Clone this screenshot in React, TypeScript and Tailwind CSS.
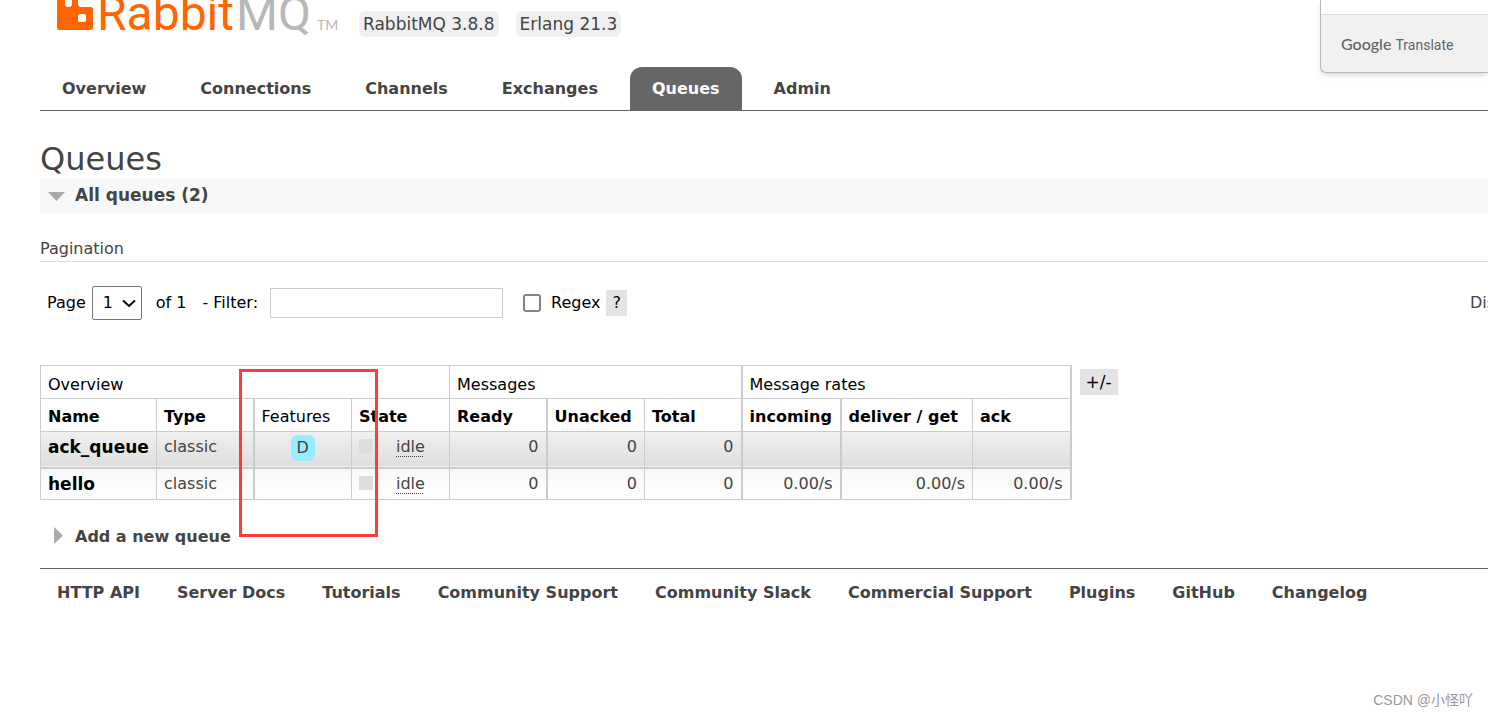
import type { ReactNode } from 'react'

const tabs = ['Overview', 'Connections', 'Channels', 'Exchanges', 'Queues', 'Admin']

const footerLinks = [
  'HTTP API',
  'Server Docs',
  'Tutorials',
  'Community Support',
  'Community Slack',
  'Commercial Support',
  'Plugins',
  'GitHub',
  'Changelog',
]

const queues = [
  { name: 'ack_queue', type: 'classic', durable: true, state: 'idle', ready: 0, unacked: 0, total: 0, rate: '' },
  { name: 'hello', type: 'classic', durable: false, state: 'idle', ready: 0, unacked: 0, total: 0, rate: '0.00/s' },
]

function Logo() {
  return (
    <svg width="284" height="36" viewBox="0 0 284 36" role="img" aria-label="RabbitMQ">
      <path
        fill="#ff6600"
        fillRule="evenodd"
        d="M0 0H8V4Q8 7 11 7H12Q15 7 15 4V0H21V4Q21 7 24 7H34Q36 7 36 9V27Q36 30 33 30H2Q0 30 0 28ZM23 14Q21 14 21 16V20Q21 22 23 22H27Q29 22 29 20V16Q29 14 27 14Z"
      />
      <text x="40" y="30" fontSize="48" fill="#ff6600" fontFamily="Roboto, sans-serif">
        Rabbit
      </text>
      <text x="179" y="30" fontSize="48" fill="#b8b8b8" fontFamily="Roboto, sans-serif">
        MQ
      </text>
      <text x="260" y="30" fontSize="14" fill="#b8b8b8" fontFamily="Lato, sans-serif">
        TM
      </text>
    </svg>
  )
}

function Pill({ children }: { children: ReactNode }) {
  return <span className="rounded-md bg-[#f0f0f0] px-1 text-[17px] leading-[26px]">{children}</span>
}

function HeadCell({ children, bold = true }: { children: ReactNode; bold?: boolean }) {
  return (
    <th className={`border border-[#ccc] px-[7px] pt-1 text-left text-black ${bold ? 'font-bold' : 'font-normal'}`}>
      {children}
    </th>
  )
}

function NumberCell({ children }: { children: ReactNode }) {
  return <td className="border border-[#ccc] px-[7px] pt-[3px] text-right align-top">{children}</td>
}

function QueueTable() {
  return (
    <table className="w-[1030px] shrink-0 table-fixed border-collapse border-r-2 border-[#ccc] leading-6">
      <colgroup>
        <col className="w-[116px]" />
        <col className="w-[97px] border-r-2 border-[#ccc]" />
        <col className="w-[98px]" />
        <col className="w-[98px]" />
        <col className="w-[97px] border-r-2 border-[#ccc]" />
        <col className="w-[98px]" />
        <col className="w-[97px] border-r-2 border-[#ccc]" />
        <col className="w-[99px] border-r-2 border-[#ccc]" />
        <col className="w-[132px]" />
        <col className="w-[98px]" />
      </colgroup>
      <thead>
        <tr className="h-[33px] text-left text-black">
          <th colSpan={4} className="border border-[#ccc] px-[7px] pt-1.5 font-normal">Overview</th>
          <th colSpan={3} className="border border-[#ccc] px-[7px] pt-1.5 font-normal">Messages</th>
          <th colSpan={3} className="border border-[#ccc] px-[7px] pt-1.5 font-normal">Message rates</th>
        </tr>
        <tr className="h-[33px]">
          <HeadCell>Name</HeadCell>
          <HeadCell>Type</HeadCell>
          <HeadCell bold={false}>Features</HeadCell>
          <HeadCell>State</HeadCell>
          <HeadCell>Ready</HeadCell>
          <HeadCell>Unacked</HeadCell>
          <HeadCell>Total</HeadCell>
          <HeadCell>incoming</HeadCell>
          <HeadCell>deliver / get</HeadCell>
          <HeadCell>ack</HeadCell>
        </tr>
      </thead>
      <tbody>
        {queues.map((q) => (
          <tr
            key={q.name}
            className={
              q.durable
                ? 'h-9 border-b-2 border-[#ccc] bg-linear-to-b from-[#f0f0f0] to-[#dfdfdf]'
                : 'h-8 bg-linear-to-b from-[#f8f8f8] to-white'
            }
          >
            <td className="border border-[#ccc] px-[7px] pt-[3px] align-top text-[17px] font-bold text-black">
              <a href="#queue">{q.name}</a>
            </td>
            <td className="border border-[#ccc] px-[7px] pt-[3px] align-top">{q.type}</td>
            <td className="border border-[#ccc] pt-[3px] text-center align-top">
              {q.durable && (
                <span className="inline-block rounded-md bg-[#99ebff] px-1.5 leading-[26px]">D</span>
              )}
            </td>
            <td className="border border-[#ccc] px-[7px] pt-1 align-top">
              <div className="flex items-start">
                <span className="mt-[3px] mr-[23px] size-3.5 bg-[#ddd]" />
                <span className="leading-[22px] underline decoration-dotted decoration-1 underline-offset-4">
                  {q.state}
                </span>
              </div>
            </td>
            <NumberCell>{q.ready}</NumberCell>
            <NumberCell>{q.unacked}</NumberCell>
            <NumberCell>{q.total}</NumberCell>
            <NumberCell>{q.rate}</NumberCell>
            <NumberCell>{q.rate}</NumberCell>
            <NumberCell>{q.rate}</NumberCell>
          </tr>
        ))}
      </tbody>
    </table>
  )
}

function TranslatePanel() {
  return (
    <aside className="absolute top-0 right-0 w-[168px] rounded-bl-md border-b border-l border-[#b4b8b8] bg-[#f1f1f1] shadow-md">
      <div className="h-3.5 bg-white" />
      <div className="border-t border-[#ddd] pl-5 font-[Lato,sans-serif] text-base leading-[57px] text-[#636569]">
        <span className="font-medium">Google</span> <span className="font-[Roboto] text-sm leading-none">Translate</span>
      </div>
    </aside>
  )
}

export default function App() {
  return (
    <div className="relative min-h-screen overflow-hidden bg-white pl-10 font-['DejaVu_Sans',Verdana,sans-serif] text-base text-[#444]">
      <header>
        <div className="flex h-[67px] items-start pl-[17px]">
          <Logo />
          <div className="flex gap-[17px] pt-[11px] pl-[18px]">
            <Pill>RabbitMQ 3.8.8</Pill>
            <Pill>Erlang 21.3</Pill>
          </div>
        </div>
        <nav className="flex gap-2.5 border-b border-[#666] font-bold">
          {tabs.map((tab) => (
            <a
              key={tab}
              href="#tab"
              className={`px-[22px] leading-[43px] ${tab === 'Queues' ? 'rounded-t-xl bg-[#666] text-white' : ''}`}
            >
              {tab}
            </a>
          ))}
        </nav>
      </header>

      <main>
        <h1 className="pt-7 text-[32px] leading-10">Queues</h1>
        <h2 className="bg-[#f8f8f8] font-bold">
          <button type="button" className="flex h-[34px] items-center pl-2 text-[17px]">
            <svg width="17" height="10" viewBox="0 0 17 10" className="mr-2.5" aria-hidden="true">
              <path d="M0 1H17L8.500 10Z" fill="#aaa" />
            </svg>
            All queues (2)
          </button>
        </h2>

        <h3 className="mt-6 border-b border-[#ddd] leading-6">Pagination</h3>
        <div className="mt-6 flex items-center pl-[7px] whitespace-nowrap text-black">
          <label htmlFor="page" className="mr-1.5">Page</label>
          <div className="relative">
            <select id="page" className="h-[34px] w-[50px] appearance-none rounded-xs border border-[#767676] bg-white pl-2.5">
              <option>1</option>
            </select>
            <svg
              width="14"
              height="9"
              viewBox="0 0 14 9"
              className="pointer-events-none absolute top-[13px] right-1.5"
              aria-hidden="true"
            >
              <path d="M1 1.500L7 7L13 1.500" fill="none" stroke="#000" strokeWidth="2" />
            </svg>
          </div>
          <span className="ml-3.5">of 1</span>
          <label htmlFor="filter" className="ml-4">- Filter:</label>
          <input id="filter" type="text" className="ml-3 h-[30px] w-[233px] border border-[#ccc] px-1" />
          <input
            id="regex"
            type="checkbox"
            className="ml-5 size-[18px] appearance-none rounded-[3px] border-2 border-[#858585]"
          />
          <label htmlFor="regex" className="ml-2.5">Regex</label>
          <button type="button" className="ml-1.5 bg-[#e4e4e4] px-1.5 leading-[26px]">?</button>
          <span className="ml-auto w-[18px] text-[#444]">Displaying</span>
        </div>

        <div className="relative mt-[45px] flex items-start">
          <QueueTable />
          <button type="button" className="mt-1 ml-2 bg-[#e4e4e4] px-1.5 text-[17px] leading-[26px] text-black">+/-</button>
          <div className="pointer-events-none absolute top-1 left-[199px] h-[168px] w-[139px] border-3 border-[#ff3b3b]" />
        </div>

        <h2 className="mt-5 font-bold">
          <button type="button" className="flex h-[34px] items-center pl-3.5">
            <svg width="9" height="21" viewBox="0 0 9 21" className="mr-3" aria-hidden="true">
              <path d="M0 0L9 8.500L0 17Z" fill="#aaa" />
            </svg>
            Add a new queue
          </button>
        </h2>
      </main>

      <footer className="mt-3.5 flex flex-wrap gap-x-[37px] border-t border-[#666] pt-3 pl-[17px] font-bold">
        {footerLinks.map((link) => (
          <a key={link} href="#footer">{link}</a>
        ))}
      </footer>

      <TranslatePanel />
      <p className="absolute right-[15px] bottom-1.5 font-['Liberation_Sans','Noto_Sans_CJK_SC',sans-serif] text-sm text-[#999]">
        CSDN @小怪吖
      </p>
    </div>
  )
}
